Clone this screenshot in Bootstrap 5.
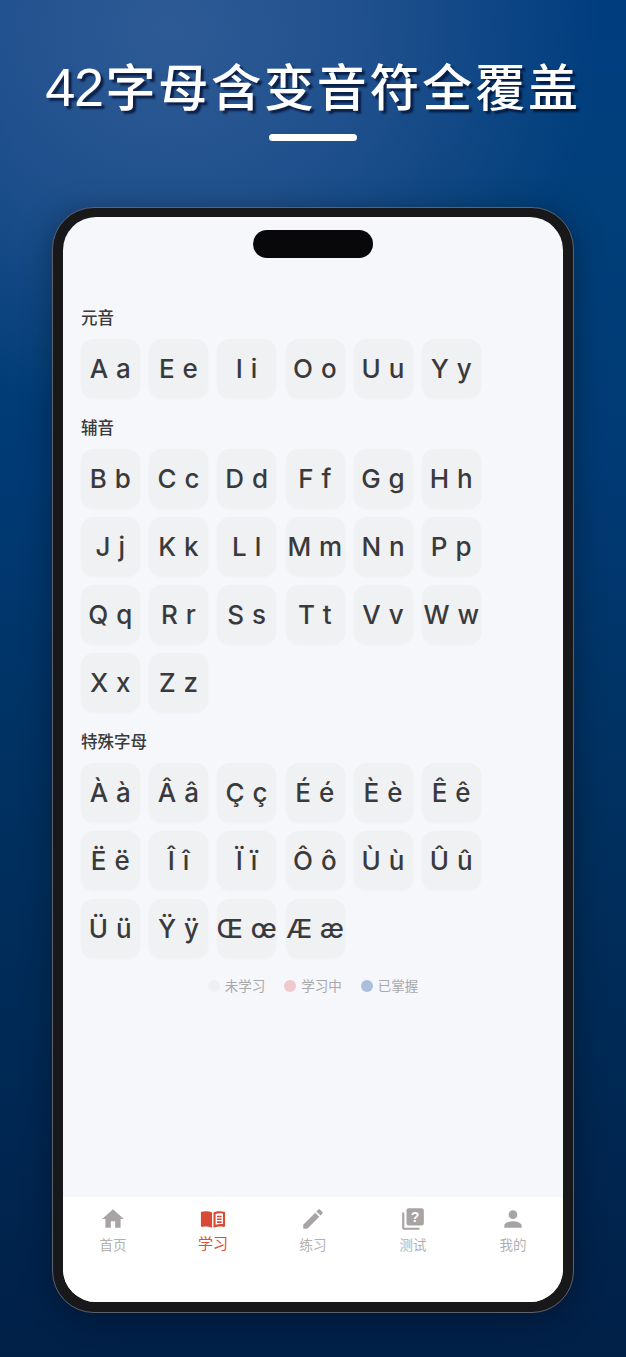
<!DOCTYPE html>
<html lang="zh">
<head>
<meta charset="utf-8">
<meta name="viewport" content="width=device-width, initial-scale=1">
<link href="https://cdn.jsdelivr.net/npm/bootstrap@5.3.0/dist/css/bootstrap.min.css" rel="stylesheet">
<style>
html,body{height:100%}
body{width:626px;height:1357px;overflow:hidden;font-family:Inter,"Noto Sans CJK SC",sans-serif;
background:radial-gradient(ellipse 430px 400px at 170px 30px,rgba(48,92,150,.95) 0%,rgba(40,85,145,.8) 45%,rgba(20,70,130,0) 100%),linear-gradient(180deg,#003d80 0%,#003f7a 15%,#003a74 35%,#00305f 60%,#002048 100%);}
.hero{height:207px;padding-top:57px}
.hero-title{margin:0;font-family:"Liberation Sans","Noto Sans CJK SC",sans-serif;font-size:50px;line-height:60px;font-weight:500;color:#fff;letter-spacing:2.8px;text-shadow:3px 3px 2px rgba(0,10,40,.7);white-space:nowrap}
.hero-num{font-size:54px;letter-spacing:-1.4px;margin-right:3px}
.hero-rule{width:88px;height:7px;border-radius:4px;background:#fff;margin:15px auto 0}
.phone-shell{width:522px;height:1106px;margin:0 auto;padding:9px 10px 10px 10px;background:#18181b;border:1px solid #5c6270;border-radius:42px;box-shadow:0 4px 30px rgba(0,0,0,.35)}
.phone-screen{height:100%;background:#f6f7fb;border-radius:33px;overflow:hidden;position:relative}
.island{position:absolute;top:13px;left:190px;width:120px;height:28px;border-radius:14px;background:#08080a}
.screen-body{padding:90px 18px 0 18px;height:980px}
.sect-title{font-size:16.5px;line-height:22px;font-weight:500;color:#3a3a3c;margin-bottom:10px}
.tile-grid{display:grid;grid-template-columns:repeat(6,59px);gap:9px 9.2px;margin-bottom:19px}
.tile-grid-last{margin-bottom:18px}
.tile{height:59px;border-radius:13px;background:#f0f1f2;color:#3a3a3c;font-size:26px;font-weight:500;letter-spacing:.5px;white-space:nowrap;box-shadow:0 1px 3px rgba(0,0,0,.03)}
.legend{gap:19px;color:#a8a8ab;font-size:13.5px;line-height:20px}
.dot{width:12px;height:12px;border-radius:50%;margin-right:5px}
.dot-new{background:#eef0f4}
.dot-learning{background:#eec9ce}
.dot-known{background:#abbfdc}
.tabbar{height:105px;background:#fff;padding-top:9px}
.tab-item{width:100px;color:#b3b1b0;font-size:13.5px;line-height:18px}
.tab-item svg{display:block;width:26px;height:26px;fill:#a8a4a3;margin-bottom:4px}
.tab-active{color:#d9503d;font-size:15px;line-height:20px}
.tab-active svg{fill:#d94a35;margin-bottom:2px}
.q-mark{font-family:"Liberation Sans",sans-serif;font-size:13px;font-weight:700;fill:#fff;text-anchor:middle}
</style>
</head>
<body>
<header class="hero text-center d-flex flex-column align-items-center">
  <h1 class="hero-title"><span class="hero-num">42</span>字母含变音符全覆盖</h1>
  <div class="hero-rule"></div>
</header>

<div class="phone-shell">
  <div class="phone-screen d-flex flex-column">
    <div class="island"></div>
    <main class="screen-body">
      <div class="sect-title">元音</div>
      <div class="tile-grid">
        <div class="tile d-flex align-items-center justify-content-center">A a</div>
        <div class="tile d-flex align-items-center justify-content-center">E e</div>
        <div class="tile d-flex align-items-center justify-content-center">I i</div>
        <div class="tile d-flex align-items-center justify-content-center">O o</div>
        <div class="tile d-flex align-items-center justify-content-center">U u</div>
        <div class="tile d-flex align-items-center justify-content-center">Y y</div>
      </div>
      <div class="sect-title">辅音</div>
      <div class="tile-grid">
        <div class="tile d-flex align-items-center justify-content-center">B b</div>
        <div class="tile d-flex align-items-center justify-content-center">C c</div>
        <div class="tile d-flex align-items-center justify-content-center">D d</div>
        <div class="tile d-flex align-items-center justify-content-center">F f</div>
        <div class="tile d-flex align-items-center justify-content-center">G g</div>
        <div class="tile d-flex align-items-center justify-content-center">H h</div>
        <div class="tile d-flex align-items-center justify-content-center">J j</div>
        <div class="tile d-flex align-items-center justify-content-center">K k</div>
        <div class="tile d-flex align-items-center justify-content-center">L l</div>
        <div class="tile d-flex align-items-center justify-content-center">M m</div>
        <div class="tile d-flex align-items-center justify-content-center">N n</div>
        <div class="tile d-flex align-items-center justify-content-center">P p</div>
        <div class="tile d-flex align-items-center justify-content-center">Q q</div>
        <div class="tile d-flex align-items-center justify-content-center">R r</div>
        <div class="tile d-flex align-items-center justify-content-center">S s</div>
        <div class="tile d-flex align-items-center justify-content-center">T t</div>
        <div class="tile d-flex align-items-center justify-content-center">V v</div>
        <div class="tile d-flex align-items-center justify-content-center">W w</div>
        <div class="tile d-flex align-items-center justify-content-center">X x</div>
        <div class="tile d-flex align-items-center justify-content-center">Z z</div>
      </div>
      <div class="sect-title">特殊字母</div>
      <div class="tile-grid tile-grid-last">
        <div class="tile d-flex align-items-center justify-content-center">À à</div>
        <div class="tile d-flex align-items-center justify-content-center">Â â</div>
        <div class="tile d-flex align-items-center justify-content-center">Ç ç</div>
        <div class="tile d-flex align-items-center justify-content-center">É é</div>
        <div class="tile d-flex align-items-center justify-content-center">È è</div>
        <div class="tile d-flex align-items-center justify-content-center">Ê ê</div>
        <div class="tile d-flex align-items-center justify-content-center">Ë ë</div>
        <div class="tile d-flex align-items-center justify-content-center">Î î</div>
        <div class="tile d-flex align-items-center justify-content-center">Ï ï</div>
        <div class="tile d-flex align-items-center justify-content-center">Ô ô</div>
        <div class="tile d-flex align-items-center justify-content-center">Ù ù</div>
        <div class="tile d-flex align-items-center justify-content-center">Û û</div>
        <div class="tile d-flex align-items-center justify-content-center">Ü ü</div>
        <div class="tile d-flex align-items-center justify-content-center">Ÿ ÿ</div>
        <div class="tile d-flex align-items-center justify-content-center">Œ œ</div>
        <div class="tile d-flex align-items-center justify-content-center">Æ æ</div>
      </div>
      <div class="legend d-flex justify-content-center align-items-center">
        <div class="d-flex align-items-center"><span class="dot dot-new"></span>未学习</div>
        <div class="d-flex align-items-center"><span class="dot dot-learning"></span>学习中</div>
        <div class="d-flex align-items-center"><span class="dot dot-known"></span>已掌握</div>
      </div>
    </main>
    <nav class="tabbar d-flex justify-content-center align-items-start">
      <div class="tab-item d-flex flex-column align-items-center">
        <svg viewBox="0 0 24 24"><path d="M10 20v-6h4v6h5v-8h3L12 3 2 12h3v8z"/></svg>首页
      </div>
      <div class="tab-item tab-active d-flex flex-column align-items-center">
        <svg viewBox="0 0 28 28"><path d="M1 6.500c3.500-1.200 8-1.200 12 .5v16.500c-4-1.500-7.500-1.500-10.500-1C1.600 22.700 1 22 1 21z"/><path fill-rule="evenodd" d="M14.500 7c3.800-1.700 8.500-1.700 12.500-.5V21c0 1-.6 1.700-1.500 1.500-3-.5-6.500-.5-11 1zM16.800 8.500V20.200c2.500-.8 5-1 7.900-.7V8.300c-2.900-.6-5.400-.4-7.900.2z"/><path d="M18.300 10.500h5v1.700h-5zM18.300 13.500h5v1.700h-5zM18.300 16.500h5v1.700h-5z"/></svg>学习
      </div>
      <div class="tab-item d-flex flex-column align-items-center">
        <svg viewBox="0 0 24 24"><path d="M3 17.250V21h3.750L17.810 9.940l-3.750-3.750L3 17.250zM20.710 7.040a1 1 0 0 0 0-1.410l-2.340-2.340a1 1 0 0 0-1.410 0l-1.830 1.830 3.750 3.750 1.830-1.830z"/></svg>练习
      </div>
      <div class="tab-item d-flex flex-column align-items-center">
        <svg viewBox="0 0 24 24"><path d="M4 6H2v14c0 1.100.9 2 2 2h14v-2H4V6z"/><rect x="6" y="2" width="16" height="16" rx="2"/><text class="q-mark" x="14" y="14.500">?</text></svg>测试
      </div>
      <div class="tab-item d-flex flex-column align-items-center">
        <svg viewBox="0 0 24 24"><path d="M12 12c2.210 0 4-1.790 4-4s-1.790-4-4-4-4 1.790-4 4 1.790 4 4 4zm0 2c-2.670 0-8 1.340-8 4v2h16v-2c0-2.660-5.330-4-8-4z"/></svg>我的
      </div>
    </nav>
  </div>
</div>
<script src="https://cdn.jsdelivr.net/npm/bootstrap@5.3.0/dist/js/bootstrap.bundle.min.js"></script>
</body>
</html>
